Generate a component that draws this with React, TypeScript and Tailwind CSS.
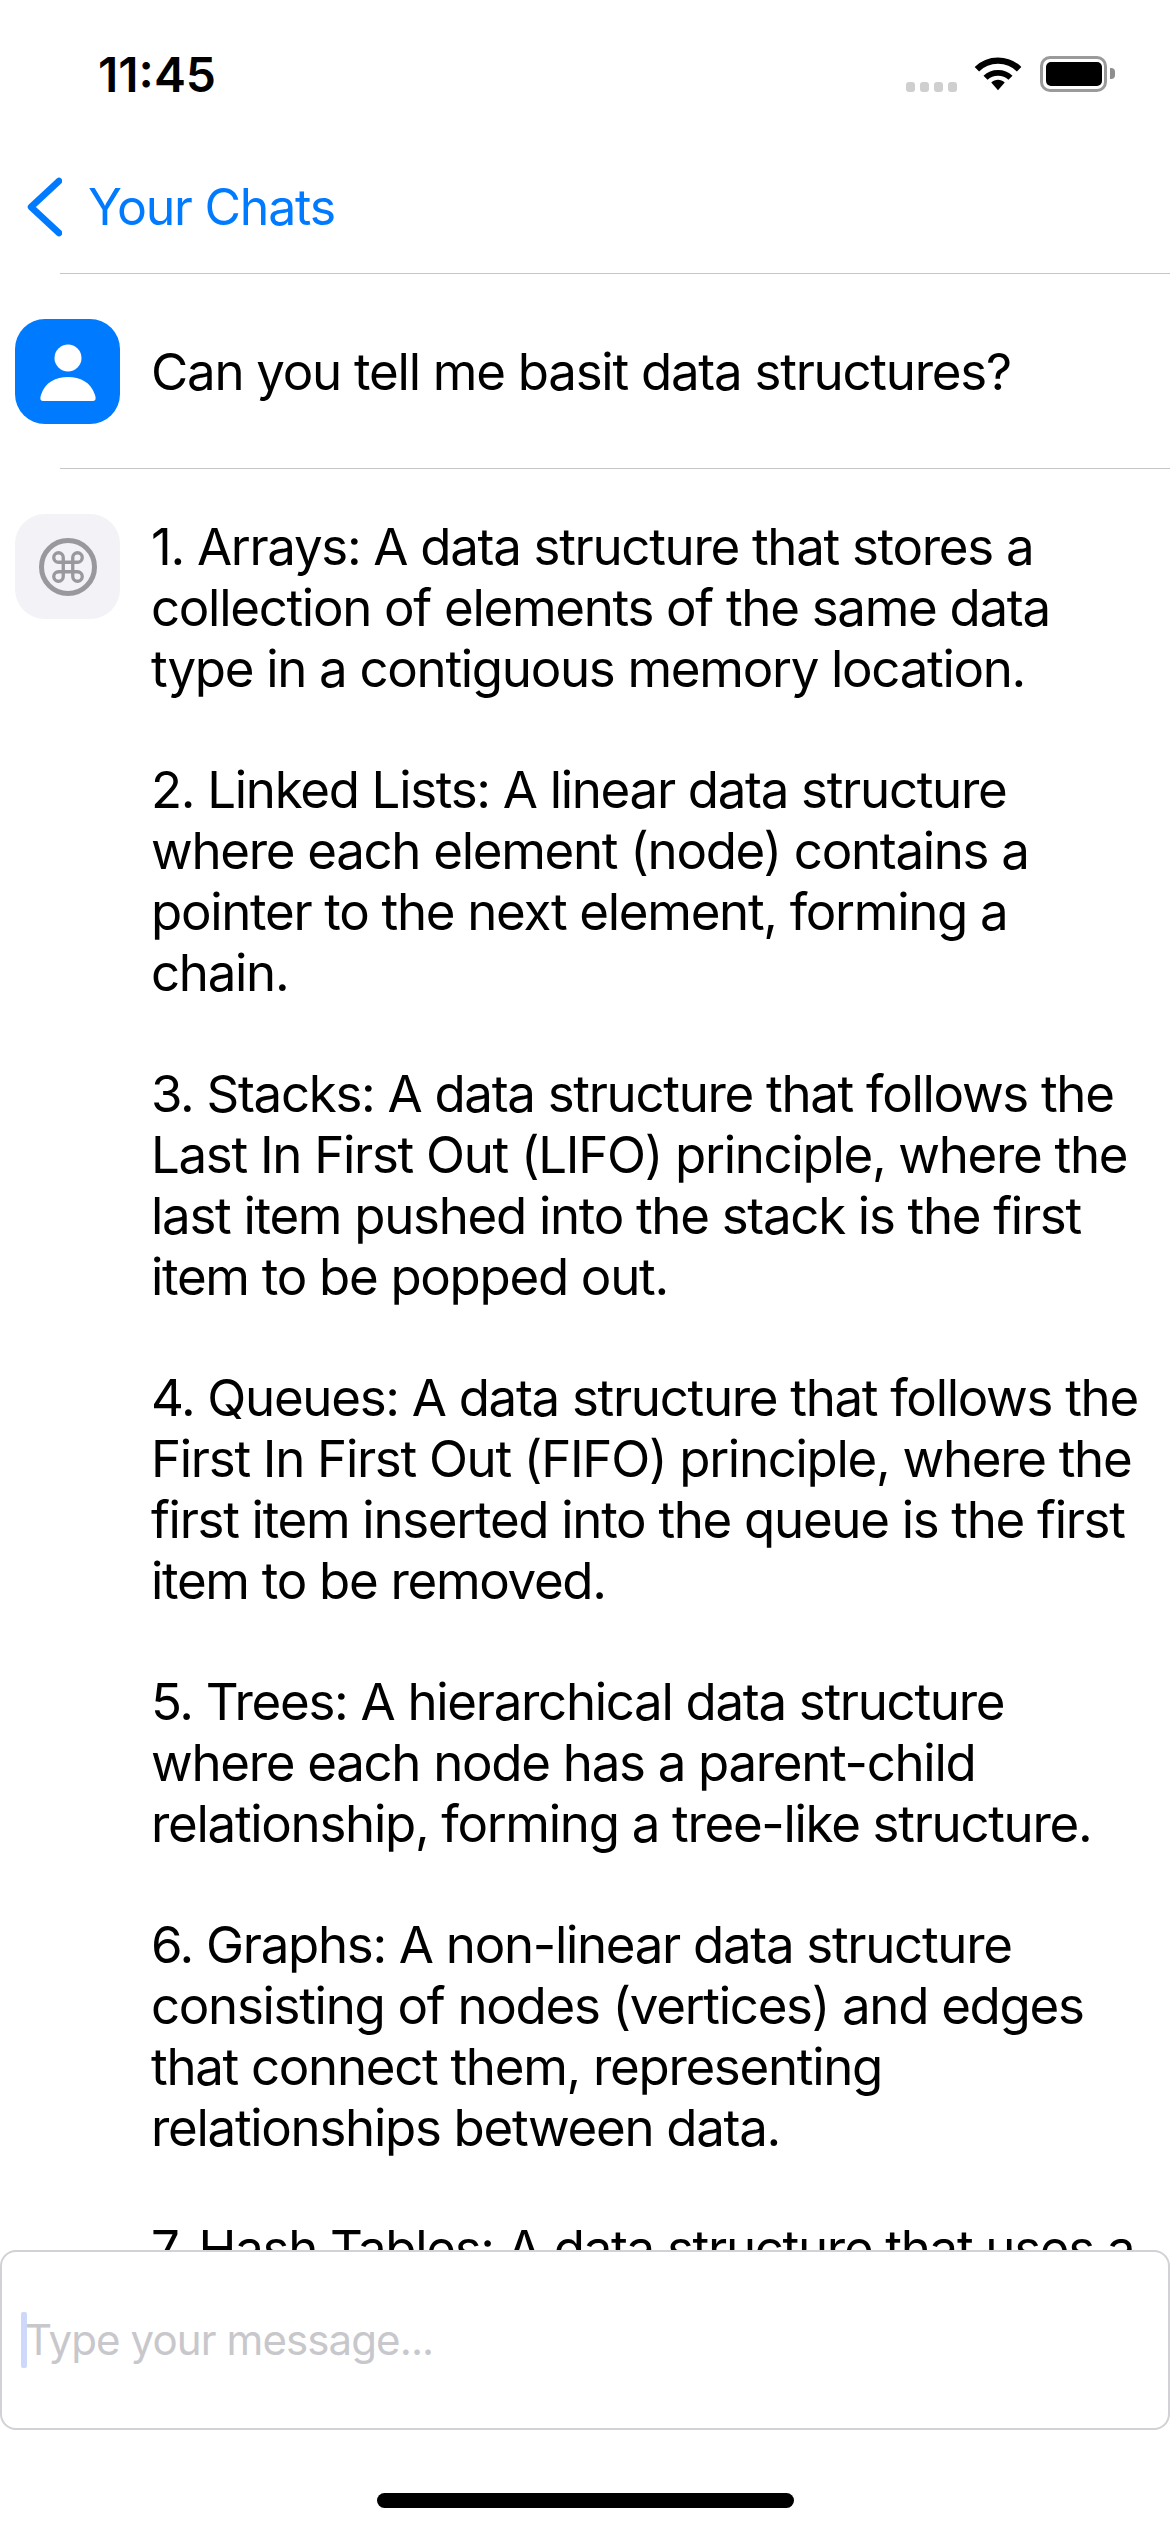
import React from 'react';
import { Command } from 'lucide-react';

const answerLines = [
    '1. Arrays: A data structure that stores a',
    'collection of elements of the same data',
    'type in a contiguous memory location.',
    '',
    '2. Linked Lists: A linear data structure',
    'where each element (node) contains a',
    'pointer to the next element, forming a',
    'chain.',
    '',
    '3. Stacks: A data structure that follows the',
    'Last In First Out (LIFO) principle, where the',
    'last item pushed into the stack is the first',
    'item to be popped out.',
    '',
    '4. Queues: A data structure that follows the',
    'First In First Out (FIFO) principle, where the',
    'first item inserted into the queue is the first',
    'item to be removed.',
    '',
    '5. Trees: A hierarchical data structure',
    'where each node has a parent-child',
    'relationship, forming a tree-like structure.',
    '',
    '6. Graphs: A non-linear data structure',
    'consisting of nodes (vertices) and edges',
    'that connect them, representing',
    'relationships between data.',
    '',
    '7. Hash Tables: A data structure that uses a',
];

const StatusBar: React.FC = () => (
    <div className="flex h-[150px] shrink-0 items-start justify-between pl-[98px] pr-[55px] pt-[50px]">
        <span className="text-[48px] leading-[50px] font-semibold text-black">11:45</span>
        <div className="flex items-start pt-[5px]">
            <div className="mt-[27px] mr-[17px] flex gap-[5px]">
                <div className="h-[10px] w-[9px] rounded-[3px] bg-[#cfcfcf]" />
                <div className="h-[10px] w-[9px] rounded-[3px] bg-[#cfcfcf]" />
                <div className="h-[10px] w-[9px] rounded-[3px] bg-[#cfcfcf]" />
                <div className="h-[10px] w-[9px] rounded-[3px] bg-[#cfcfcf]" />
            </div>
            <svg width="48" height="37" viewBox="0 0 50 37" className="mr-[18px]">
                <path d="M3 14 C 15 2, 35 2, 47 14" fill="none" stroke="black" strokeWidth="6.5" />
                <path d="M12 23 C 19 16, 31 16, 38 23" fill="none" stroke="black" strokeWidth="6" />
                <path d="M18 28 C 22 24, 28 24, 32 28 L 25 36 Z" fill="black" />
            </svg>
            <div className="mt-[1px] flex h-[36px] w-[67px] items-center justify-center rounded-[10px] border-[3px] border-[#9a9a9a]">
                <div className="h-[24px] w-[56px] rounded-[5px] bg-black" />
            </div>
            <div className="mt-[13px] ml-[3px] h-[11px] w-[5px] rounded-r-[4px] bg-[#8e8e8e]" />
        </div>
    </div>
);

const NavBar: React.FC = () => (
    <div className="flex h-[123px] shrink-0 items-start pl-[26px] pt-[27px]">
        <svg width="36" height="60" viewBox="0 0 36 60">
            <path d="M33 4 L5 30 L33 56" fill="none" stroke="#007aff" strokeWidth="6.5" strokeLinecap="round" strokeLinejoin="round" />
        </svg>
        <span className="ml-[26px] text-[50px] leading-[60px] tracking-[-1.2px] text-[#007aff]">Your Chats</span>
    </div>
);

const Divider: React.FC = () => <div className="ml-[60px] h-px shrink-0 bg-[#c6c6c8]" />;

const App: React.FC = () => {
    return (
        <div className="flex h-[2532px] w-[1170px] flex-col overflow-hidden bg-white font-['Inter',sans-serif] text-black">
            <StatusBar />
            <NavBar />
            <Divider />
            <div className="flex h-[194px] shrink-0 items-start pl-[15px] pt-[45px]">
                <div className="flex h-[105px] w-[105px] shrink-0 items-center justify-center rounded-[30px] bg-[#007aff]">
                    <svg width="56" height="58" viewBox="0 0 56 58" className="mt-[2px]">
                        <circle cx="28" cy="14" r="13.5" fill="white" />
                        <path d="M3 57 C 0 57 0 54 1 51 C 5 38 16 33 28 33 C 40 33 51 38 55 51 C 56 54 56 57 53 57 Z" fill="white" />
                    </svg>
                </div>
                <div className="ml-[31px] pt-[22px] text-[51px] leading-[61px] tracking-[-1.25px] whitespace-nowrap">
                    Can you tell me basit data structures?
                </div>
            </div>
            <Divider />
            <div className="flex min-h-0 flex-1 items-start overflow-hidden pl-[15px] pt-[45px]">
                <div className="flex h-[105px] w-[105px] shrink-0 items-center justify-center rounded-[30px] bg-[#f2f2f7]">
                    <div className="flex h-[58px] w-[58px] items-center justify-center rounded-full border-[5px] border-[#98989d]">
                        <Command size={38} strokeWidth={2.1} color="#98989d" />
                    </div>
                </div>
                <div className="ml-[31px] pt-[3px] text-[51px] leading-[60.8px] tracking-[-1.3px] whitespace-nowrap">
                    {answerLines.map((line, i) => (
                        <div key={i} className="h-[60.8px]">{line}</div>
                    ))}
                </div>
            </div>
            <div className="flex h-[180px] shrink-0 items-center rounded-[16px] border-2 border-[#d1d1d6] bg-white pl-[19px]">
                <div className="h-[56px] w-[6px] shrink-0 rounded-[2px] bg-[#cdd8fb]" />
                <span className="-ml-[2px] text-[42px] leading-[50px] tracking-[-0.9px] text-[#c7c7cc]">Type your message...</span>
            </div>
            <div className="flex h-[102px] shrink-0 justify-center pt-[63px]">
                <div className="h-[15px] w-[417px] rounded-full bg-black" />
            </div>
        </div>
    );
};

export default App;
